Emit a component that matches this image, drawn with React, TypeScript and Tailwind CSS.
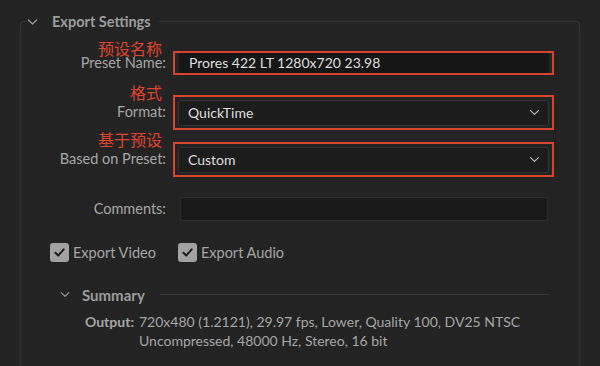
const SANS = "font-['Lato','Noto_Sans_CJK_SC',sans-serif]";

function Chevron({ className = "" }: { className?: string }) {
  return (
    <svg viewBox="0 0 12 8" className={className} fill="none" stroke="currentColor" strokeWidth="1.4" strokeLinecap="round" strokeLinejoin="round">
      <path d="M1.5 1.8 6 6.2l4.5-4.4" />
    </svg>
  );
}

function Check() {
  return (
    <span className="flex h-[19px] w-[19px] items-center justify-center rounded-[3px] bg-[#a2a2a2]">
      <svg viewBox="0 0 14 14" className="h-[13px] w-[13px]" fill="none" stroke="#1e1e1e" strokeWidth="2.2" strokeLinecap="round" strokeLinejoin="round">
        <path d="M2.5 7.3 5.6 10.3 11.5 3.6" />
      </svg>
    </span>
  );
}

function Row({
  cn,
  label,
  boxH,
  children,
}: {
  cn?: string;
  label: string;
  boxH: string;
  children: React.ReactNode;
}) {
  return (
    <div className="grid grid-cols-[145px_1fr] gap-x-[7px]">
      <div className="flex flex-col items-end">
        {cn && <span className="mr-[4px] h-[14px] text-[16px] leading-[14px] text-[#e0432d]">{cn}</span>}
        <div className={`flex items-center ${boxH} ${cn ? "-mt-[5px]" : ""}`}>
          <span className="text-[14.5px] leading-[14px] text-[#a6a6a6]">{label}</span>
        </div>
      </div>
      <div className="flex flex-col justify-end">{children}</div>
    </div>
  );
}

export default function App() {
  return (
    <div className={`h-[366px] w-[600px] overflow-hidden bg-[#232323] ${SANS}`}>
      <fieldset className="ml-[20px] mt-[11px] w-[560px] rounded-[4px] border border-[#363636] pb-10">
        <legend className="ml-[6px] flex items-center pr-2">
          <Chevron className="h-[8px] w-[11px] text-[#9a9a9a]" />
          <span className="ml-[14px] text-[14.5px] font-bold text-[#9c9c9c]">Export Settings</span>
        </legend>

        <div className="mt-[9px] flex flex-col">
          {/* Preset name */}
          <Row cn="预设名称" label="Preset Name:" boxH="h-[24px]">
            <div className="mr-[25px] h-[24px] border-2 border-[#d8432d] pl-[4px] pr-[3px]">
              <div className="h-[20px] rounded-[2px] bg-[#161616] pl-[10px] text-[14px] leading-[20px] text-[#dedede]">
                Prores 422 LT 1280x720 23.98
              </div>
            </div>
          </Row>

          {/* Format */}
          <div className="mt-[11px]">
            <Row cn="格式" label="Format:" boxH="h-[35px]">
              <div className="mr-[25px] h-[35px] border-2 border-[#d8432d] px-[3px] pt-[3px]">
                <div className="flex h-[26px] items-center justify-between rounded-[3px] border border-[#343434] bg-[#1c1c1c] pl-[9px] pr-[8px] text-[14px] text-[#dedede]">
                  <span>QuickTime</span>
                  <Chevron className="h-[7px] w-[11px] text-[#b4b4b4]" />
                </div>
              </div>
            </Row>
          </div>

          {/* Based on preset */}
          <div className="mt-[3px]">
            <Row cn="基于预设" label="Based on Preset:" boxH="h-[35px]">
              <div className="mr-[25px] h-[35px] border-2 border-[#d8432d] px-[3px] pt-[3px]">
                <div className="flex h-[26px] items-center justify-between rounded-[3px] border border-[#343434] bg-[#1c1c1c] pl-[9px] pr-[8px] text-[14px] text-[#dedede]">
                  <span>Custom</span>
                  <Chevron className="h-[7px] w-[11px] text-[#b4b4b4]" />
                </div>
              </div>
            </Row>
          </div>

          {/* Comments */}
          <div className="mt-[20px]">
            <Row label="Comments:" boxH="h-[24px]">
              <div className="mr-[31px] ml-[7px] h-[24px] rounded-[3px] border border-[#2f2f2f] bg-[#1a1a1a]" />
            </Row>
          </div>

          {/* Checkboxes */}
          <div className="ml-[29px] mt-[21px] flex items-center text-[14.5px] text-[#a6a6a6]">
            <Check />
            <span className="ml-[4px]">Export Video</span>
            <span className="ml-[22px]"><Check /></span>
            <span className="ml-[4px]">Export Audio</span>
          </div>

          {/* Summary */}
          <div className="ml-[39px] mt-[20px] mr-[30px] flex items-center">
            <Chevron className="h-[7px] w-[10px] text-[#9a9a9a]" />
            <span className="ml-[12px] text-[15px] font-bold text-[#9c9c9c]">Summary</span>
            <span className="ml-[15px] h-px flex-1 bg-[#363636]" />
          </div>

          <div className="ml-[64px] mt-[6px] flex text-[14px] leading-[19px] text-[#a6a6a6]">
            <span className="font-bold">Output:</span>
            <div className="ml-[5px]">
              <div>720x480 (1.2121), 29.97 fps, Lower, Quality 100, DV25 NTSC</div>
              <div>Uncompressed, 48000 Hz, Stereo, 16 bit</div>
            </div>
          </div>
        </div>
      </fieldset>
    </div>
  );
}
